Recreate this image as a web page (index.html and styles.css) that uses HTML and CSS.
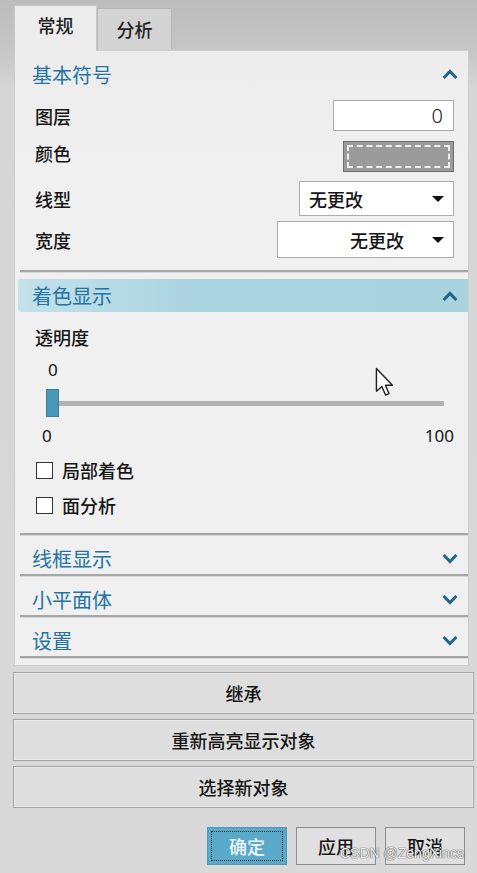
FILE: index.html
```html
<!DOCTYPE html>
<html lang="zh-CN">
<head>
<meta charset="utf-8">
<title>显示</title>
<link rel="stylesheet" href="styles.css">
</head>
<body>
<div class="page">
  <div class="tabs">
    <div class="tab active">常规</div>
    <div class="tab">分析</div>
  </div>
  <div class="panel">
    <div class="sec-head">
      <span class="sec-title">基本符号</span>
      <svg class="chev" viewBox="0 0 16 10" width="16" height="10"><path d="M1.6 9 L8 2.4 L14.4 9" fill="none" stroke="#1f6689" stroke-width="3"/></svg>
    </div>
    <div class="row r1">
      <span class="label">图层</span>
      <div class="input">0</div>
    </div>
    <div class="row r2">
      <span class="label lift">颜色</span>
      <div class="colorbox"><div class="dash"></div></div>
    </div>
    <div class="row r3">
      <span class="label">线型</span>
      <div class="select s1"><span>无更改</span><i class="tri"></i></div>
    </div>
    <div class="row r4">
      <span class="label">宽度</span>
      <div class="select s2"><span>无更改</span><i class="tri"></i></div>
    </div>
    <div class="sep s-a"></div>
    <div class="band">
      <span class="sec-title">着色显示</span>
      <svg class="chev" viewBox="0 0 16 10" width="16" height="10"><path d="M1.6 9 L8 2.4 L14.4 9" fill="none" stroke="#1f6689" stroke-width="3"/></svg>
    </div>
    <div class="label-line t1">透明度</div>
    <div class="val-top">0</div>
    <div class="slider">
      <div class="thumb"></div>
      <div class="track"></div>
    </div>
    <div class="scale"><span>0</span><span>100</span></div>
    <label class="check c1"><span class="box"></span><span>局部着色</span></label>
    <label class="check c2"><span class="box"></span><span>面分析</span></label>
    <div class="sep s-b"></div>
    <div class="fold"><span class="sec-title">线框显示</span><svg class="chev" viewBox="0 0 16 10" width="16" height="10"><path d="M1.6 1 L8 7.6 L14.4 1" fill="none" stroke="#1f6689" stroke-width="3"/></svg></div>
    <div class="sep"></div>
    <div class="fold"><span class="sec-title">小平面体</span><svg class="chev" viewBox="0 0 16 10" width="16" height="10"><path d="M1.6 1 L8 7.6 L14.4 1" fill="none" stroke="#1f6689" stroke-width="3"/></svg></div>
    <div class="sep"></div>
    <div class="fold"><span class="sec-title">设置</span><svg class="chev" viewBox="0 0 16 10" width="16" height="10"><path d="M1.6 1 L8 7.6 L14.4 1" fill="none" stroke="#1f6689" stroke-width="3"/></svg></div>
    <div class="sep"></div>
  </div>
  <div class="actions">
    <button class="wide">继承</button>
    <button class="wide">重新高亮显示对象</button>
    <button class="wide">选择新对象</button>
  </div>
  <div class="footer">
    <button class="btn ok"><span class="focus">确定</span></button>
    <button class="btn">应用</button>
    <button class="btn">取消</button>
  </div>
  <svg class="cursor" viewBox="0 0 14 21" width="20" height="30"><path d="M1 1 L1 17 L4.8 13.6 L7.4 19.6 L9.8 18.6 L7.3 12.8 L12.2 12.8 Z" fill="#fff" stroke="#222" stroke-width="1" stroke-linejoin="round"/></svg>
  <div class="watermark">CSDN @ZengXincs</div>
</div>
</body>
</html>
```
FILE: styles.css
```css
* { box-sizing: border-box; }
html, body { margin: 0; padding: 0; }
body {
  width: 477px;
  height: 873px;
  overflow: hidden;
  background: linear-gradient(#bcbcbc 0px, #c6c6c6 50px, #d6d6d6 90px, #d9d9d9 100%);
  font-family: "Noto Sans CJK SC", "Noto Sans", sans-serif;
  font-size: 18px;
  font-weight: 500;
  color: #151515;
}
.page { position: relative; width: 477px; height: 873px; }

.tabs {
  height: 50px;
  display: flex;
  align-items: flex-end;
  padding-left: 14px;
}
.tab {
  height: 42px;
  width: 75px;
  background: #d3d3d3;
  border: 1px solid #b6b6b6;
  border-bottom: none;
  display: flex;
  align-items: center;
  justify-content: center;
  padding-bottom: 2px;
  font-size: 18px;
  color: #222;
}
.tab.active {
  height: 46px;
  width: 83px;
  background: #ececec;
  border-color: #c9c9c9;
  margin-bottom: -1px;
  position: relative;
  z-index: 1;
  padding-bottom: 8px;
}

.panel {
  margin-left: 14px;
  width: 455px;
  height: 616px;
  background: linear-gradient(#ececec, #f0f0f0 120px);
  border: 1px solid #cdcdcd;
  border-top-color: #d0d0d0;
  padding: 0 0 0 5px;
  display: flex;
  flex-direction: column;
}
.sec-title { color: #2473a3; font-size: 20px; font-weight: 400; }
.chev { margin-right: 10px; }

.sec-head {
  height: 45px;
  display: flex;
  align-items: center;
  justify-content: space-between;
  padding-left: 12px;
  padding-top: 1px;
}
.row {
  display: flex;
  align-items: center;
  justify-content: space-between;
  padding-left: 15px;
  padding-right: 14px;
}
.label { font-size: 18px; }
.label.lift { position: relative; top: -4px; }
.r1 { margin-top: 4px; height: 31px; }
.r2 { margin-top: 10px; height: 31px; }
.r3 { margin-top: 9px; height: 35px; }
.r4 { margin-top: 5px; height: 37px; }

.input {
  width: 121px;
  height: 31px;
  background: #fff;
  border: 1px solid #ababab;
  text-align: right;
  padding-right: 10px;
  line-height: 29px;
  font-family: "Noto Sans", sans-serif;
  font-size: 20px;
  font-weight: 300;
}
.colorbox {
  width: 111px;
  height: 31px;
  background: #9b9b9b;
  border: 1px solid #6e6e6e;
  padding: 3px;
}
.dash {
  width: 100%;
  height: 100%;
  border: 2px dashed #f0f0f0;
}
.select {
  height: 100%;
  background: #fff;
  border: 1px solid #adadad;
  display: flex;
  align-items: center;
  position: relative;
}
.s1 { width: 155px; padding-left: 9px; }
.s2 { width: 177px; justify-content: flex-end; padding-right: 49px; }
.tri {
  position: absolute;
  right: 9px;
  top: 50%;
  margin-top: -3px;
  width: 0;
  height: 0;
  border-left: 6px solid transparent;
  border-right: 6px solid transparent;
  border-top: 6px solid #111;
}

.sep {
  height: 2px;
  background: #a6a6a6;
  border-bottom: 1px solid #d8d8d8;
  flex: none;
  box-sizing: content-box;
}
.s-a { margin-top: 12px; }
.band {
  margin-top: 6px;
  margin-left: -2px;
  height: 33px;
  background: linear-gradient(90deg, #c2e1ea 0%, #aad4e0 40%, #a8d3df 100%);
  border-radius: 3px 0 0 3px;
  display: flex;
  align-items: center;
  justify-content: space-between;
  padding-left: 14px;
}
.label-line { padding-left: 15px; height: 24px; line-height: 24px; }
.t1 { margin-top: 13px; }
.val-top {
  margin-top: 11px;
  height: 20px;
  line-height: 20px;
  padding-left: 28px;
  font-family: "Noto Sans", sans-serif;
  font-size: 17px;
  font-weight: 400;
}
.slider {
  margin-top: 9px;
  height: 28px;
  display: flex;
  align-items: center;
  padding-left: 26px;
}
.thumb {
  width: 13px;
  height: 28px;
  background: #4b97b7;
  border: 1px solid #3c7f9c;
  flex: none;
}
.track {
  width: 385px;
  height: 5px;
  background: #b2b2b2;
}
.scale {
  margin-top: 9px;
  height: 20px;
  line-height: 20px;
  display: flex;
  justify-content: space-between;
  padding-left: 22px;
  padding-right: 14px;
  font-family: "Noto Sans", sans-serif;
  font-size: 17px;
  font-weight: 400;
}
.check {
  display: flex;
  align-items: center;
  height: 22px;
  padding-left: 16px;
  gap: 9px;
}
.c1 { margin-top: 13px; }
.c2 { margin-top: 13px; }
.box {
  width: 17px;
  height: 17px;
  background: #fff;
  border: 1px solid #333;
}
.s-b { margin-top: 17px; }
.fold {
  height: 38px;
  padding-top: 7px;
  display: flex;
  align-items: center;
  justify-content: space-between;
  padding-left: 12px;
}

.actions {
  margin: 6px 3px 0 13px;
  display: flex;
  flex-direction: column;
  gap: 5px;
}
button {
  font-family: "Noto Sans CJK SC", "Noto Sans", sans-serif;
  font-size: 18px;
  font-weight: 500;
  color: #151515;
  margin: 0;
}
.wide {
  height: 42px;
  background: #dedede;
  border: 1px solid #a3a3a3;
  box-shadow: inset 0 0 0 1px #e9e9e9;
}
.footer {
  margin-top: 19px;
  display: flex;
  justify-content: flex-end;
  gap: 9px;
  padding-right: 12px;
}
.btn {
  width: 80px;
  height: 38px;
  background: #e0e0e0;
  border: 1px solid #8c8c8c;
  padding: 0;
}
.ok {
  background: #5ba9c8;
  border-color: #4d98b8;
  padding: 3px;
  color: #eaf6fb;
}
.focus {
  display: flex;
  width: 100%;
  height: 100%;
  align-items: center;
  justify-content: center;
  border: 1px dotted #1a2a33;
}
.cursor {
  position: absolute;
  left: 375px;
  top: 367px;
}
.watermark {
  position: absolute;
  left: 340px;
  top: 845px;
  font-family: "Liberation Sans", Arial, sans-serif;
  font-size: 14px;
  font-weight: 400;
  color: #f2f2f2;
  text-shadow: 0 0 1px #444, 0 0 1px #444;
}
```
